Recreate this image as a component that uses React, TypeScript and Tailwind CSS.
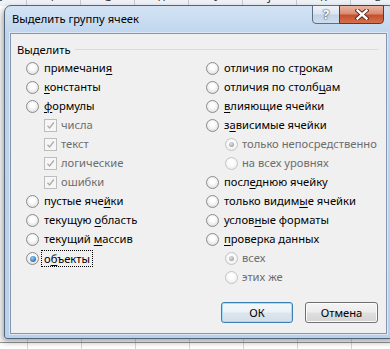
import React from "react";

type Item = { kind: "radio" | "check" | "sub"; text: string; on?: boolean; focus?: boolean };

const left: Item[] = [
  { kind: "radio", text: "примечани&я" },
  { kind: "radio", text: "&константы" },
  { kind: "radio", text: "&формулы" },
  { kind: "check", text: "числа" },
  { kind: "check", text: "текст" },
  { kind: "check", text: "логические" },
  { kind: "check", text: "ошибки" },
  { kind: "radio", text: "пустые яче&йки" },
  { kind: "radio", text: "текущую &область" },
  { kind: "radio", text: "текущий &массив" },
  { kind: "radio", text: "о&бъекты", on: true, focus: true },
];

const right: Item[] = [
  { kind: "radio", text: "отличия по ст&рокам" },
  { kind: "radio", text: "отличия по столб&цам" },
  { kind: "radio", text: "&влияющие ячейки" },
  { kind: "radio", text: "з&ависимые ячейки" },
  { kind: "sub", text: "только непосредственно", on: true },
  { kind: "sub", text: "на всех уровнях" },
  { kind: "radio", text: "посл&еднюю ячейку" },
  { kind: "radio", text: "только видим&ые ячейки" },
  { kind: "radio", text: "услов&ные форматы" },
  { kind: "radio", text: "&проверка данных" },
  { kind: "sub", text: "всех", on: true },
  { kind: "sub", text: "этих же" },
];

const cols = ["E", "F", "G", "H", "I", "J", "K", "L"];

// "&" marks the access key, drawn underlined
function Label({ text }: { text: string }) {
  const i = text.indexOf("&");
  if (i < 0) return <>{text}</>;
  return (
    <>
      {text.slice(0, i)}
      <span className="underline decoration-1 underline-offset-[2px]">{text[i + 1]}</span>
      {text.slice(i + 2)}
    </>
  );
}

function Radio({ on = false, off = false }: { on?: boolean; off?: boolean }) {
  return (
    <span
      className={
        off
          ? "flex h-[13px] w-[13px] shrink-0 items-center justify-center rounded-full border border-[#c4c4c4] bg-[radial-gradient(circle_at_50%_40%,#fdfdfd_30%,#e6e6e6)]"
          : "flex h-[13px] w-[13px] shrink-0 items-center justify-center rounded-full border border-[#8c8c8c] bg-[radial-gradient(circle_at_50%_40%,#ffffff_25%,#d4d4d4)]"
      }
    >
      {on && (
        <span
          className={
            off
              ? "h-[5px] w-[5px] rounded-full bg-[radial-gradient(circle_at_40%_35%,#e0e0e0,#8e8e8e)]"
              : "h-[6px] w-[6px] rounded-full bg-[radial-gradient(circle_at_40%_35%,#8fd0ff,#0d4a93)]"
          }
        />
      )}
    </span>
  );
}

function Check() {
  return (
    <span className="flex h-[13px] w-[13px] shrink-0 items-center justify-center border border-[#bdbdbd] bg-[#f6f6f6]">
      <svg width="9" height="9" viewBox="0 0 9 9" fill="none">
        <path d="M1.5 4.8 L3.6 7 L7.8 1.5" stroke="#acacac" strokeWidth="1.3" />
      </svg>
    </span>
  );
}

function Row({ item }: { item: Item }) {
  if (item.kind === "check")
    return (
      <div className="flex h-[19px] items-center gap-[4px] whitespace-nowrap pl-[18px] text-[#6d6d6d]">
        <Check />
        <span>{item.text}</span>
      </div>
    );
  if (item.kind === "sub")
    return (
      <div className="flex h-[19px] items-center gap-[4px] whitespace-nowrap pl-[19px] text-[#6d6d6d]">
        <Radio on={item.on} off />
        <span>{item.text}</span>
      </div>
    );
  return (
    <div className="flex h-[19px] items-center gap-[5px] whitespace-nowrap">
      <Radio on={item.on} />
      {item.focus ? (
        <span className="-ml-[3px] border border-dotted border-black px-[2px] leading-[15px]">
          <Label text={item.text} />
        </span>
      ) : (
        <span>
          <Label text={item.text} />
        </span>
      )}
    </div>
  );
}

export default function App() {
  return (
    <div className="relative h-[349px] w-[390px] overflow-hidden bg-white bg-[linear-gradient(90deg,#d6d6d6_1px,transparent_1px)] bg-[length:54px_100%] bg-[position:27px_0] font-['Noto_Sans','Open_Sans',sans-serif] text-[11.2px] text-black">
      {/* spreadsheet column headers, mostly hidden under the dialog */}
      <div className="-ml-[27px] flex h-[6px] overflow-hidden bg-[#eef1f5]">
        {cols.map((c) => (
          <div key={c} className="flex h-[6px] w-[54px] shrink-0 justify-center border-r border-[#c5cbd3]">
            <span className="-mt-[10px] text-[11px] leading-[14px] text-[#333]">{c}</span>
          </div>
        ))}
      </div>
      <div className="h-[336px]" />
      <div className="h-px bg-[#9a9a9a]" />

      {/* the dialog window, running past the right edge of the shot */}
      <div className="absolute left-[4px] top-[5px] flex h-[334px] w-[392px] flex-col rounded-t-[7px] rounded-b-[3px] border border-[#52647a] bg-[linear-gradient(180deg,#d3e3f4_0px,#bed5ed_30px,#b9d1ea_100%)] shadow-[-2px_3px_6px_rgba(0,0,0,0.35)]">
        <div className="flex h-[27px] items-start">
          <div className="pl-[7px] pt-[5px] leading-[16px]">Выделить группу ячеек</div>
          <div className="-mt-px ml-auto mr-[11px] flex">
            <div className="flex h-[19px] w-[28px] items-center justify-center rounded-bl-[4px] border border-[#5b6f88] bg-[linear-gradient(180deg,#eef3f9_0%,#dbe5f1_45%,#c3d3e6_55%,#cfdeed_100%)] text-[13px] font-bold leading-none text-white [text-shadow:0_0_2px_#2b3f58,0_0_1px_#2b3f58]">
              ?
            </div>
            <div className="-ml-px flex h-[19px] w-[45px] items-center justify-center rounded-br-[4px] border border-[#6d3326] bg-[linear-gradient(180deg,#eab7a5_0%,#dc8b70_45%,#c4502f_55%,#d4714e_100%)]">
              <svg width="14" height="11" viewBox="0 0 14 11">
                <path d="M2.5 1.5 L11.5 9.5 M11.5 1.5 L2.5 9.5" stroke="#4a2016" strokeWidth="4.2" strokeLinecap="square" />
                <path d="M2.5 1.5 L11.5 9.5 M11.5 1.5 L2.5 9.5" stroke="#ffffff" strokeWidth="2.4" strokeLinecap="square" />
              </svg>
            </div>
          </div>
        </div>

        <div className="ml-[5px] flex h-[301px] w-[377px] flex-col border border-[#8396ad] bg-[#f0f0f0] pt-[5px] shadow-[0_0_0_1px_#dce8f5]">
          <div className="flex h-[20px] items-center gap-[4px] pl-[6px] pr-[8px]">
            <span className="leading-[15px]">Выделить</span>
            <div className="h-px flex-1 bg-[#d5dbe0]" />
          </div>
          <div className="grid grid-cols-[180px_1fr] pl-[15px]">
            <div className="flex flex-col">
              {left.map((it) => (
                <Row key={it.text} item={it} />
              ))}
            </div>
            <div className="flex flex-col">
              {right.map((it) => (
                <Row key={it.text} item={it} />
              ))}
            </div>
          </div>
          <div className="mt-[15px] flex justify-end gap-[12px] pr-[8px]">
            <button className="h-[21px] w-[72px] rounded-[3px] border border-[#3c7fb1] bg-[linear-gradient(180deg,#f4f8fb_0%,#ebf2f7_48%,#dde6ee_52%,#d3dee8_100%)] leading-[19px] shadow-[inset_0_0_0_1px_#a6dcf6]">
              ОК
            </button>
            <button className="h-[21px] w-[73px] rounded-[3px] border border-[#707070] bg-[linear-gradient(180deg,#f4f4f4_0%,#ececec_48%,#dfdfdf_52%,#d4d4d4_100%)] leading-[19px] shadow-[inset_0_0_0_1px_#fbfbfb]">
              Отмена
            </button>
          </div>
        </div>
      </div>
    </div>
  );
}
